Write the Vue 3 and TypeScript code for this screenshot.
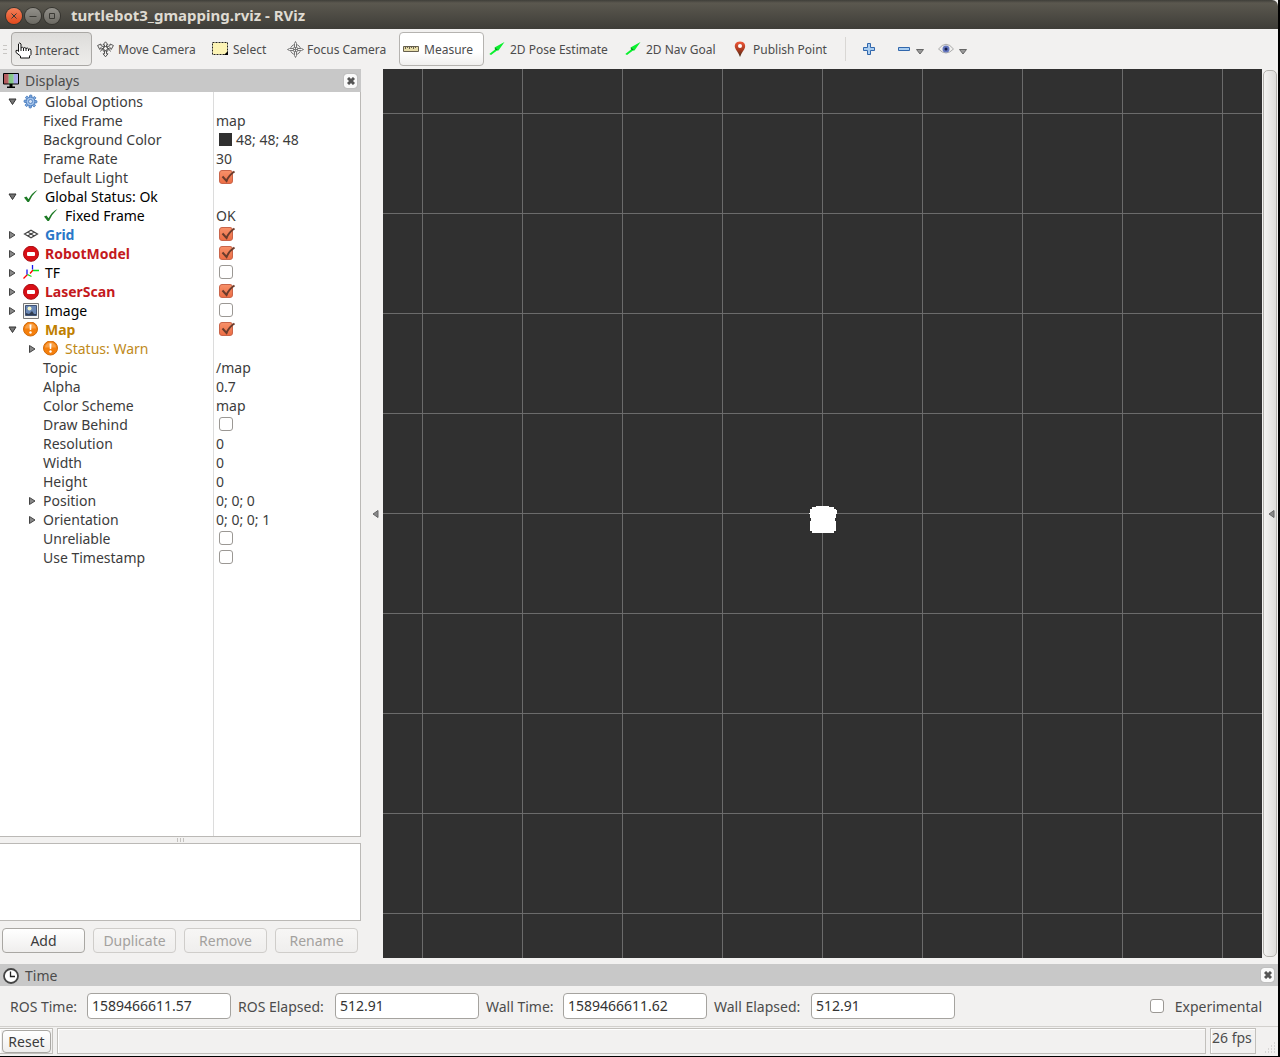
<script setup lang="ts">
import { reactive, ref } from 'vue'

interface Row {
  label: string
  depth: number
  arrow?: 'open' | 'closed'
  icon?: 'gear' | 'ok' | 'grid' | 'error' | 'tf' | 'image' | 'warn'
  tone?: 'dark' | 'enabled' | 'error' | 'warn' | 'warn-plain'
  value?: string
  swatch?: boolean
  checked?: boolean
}

const rows = reactive<Row[]>([
  { label: 'Global Options', depth: 0, arrow: 'open', icon: 'gear' },
  { label: 'Fixed Frame', depth: 1, value: 'map' },
  { label: 'Background Color', depth: 1, value: '48; 48; 48', swatch: true },
  { label: 'Frame Rate', depth: 1, value: '30' },
  { label: 'Default Light', depth: 1, checked: true },
  { label: 'Global Status: Ok', depth: 0, arrow: 'open', icon: 'ok', tone: 'dark' },
  { label: 'Fixed Frame', depth: 1, icon: 'ok', tone: 'dark', value: 'OK' },
  { label: 'Grid', depth: 0, arrow: 'closed', icon: 'grid', tone: 'enabled', checked: true },
  { label: 'RobotModel', depth: 0, arrow: 'closed', icon: 'error', tone: 'error', checked: true },
  { label: 'TF', depth: 0, arrow: 'closed', icon: 'tf', tone: 'dark', checked: false },
  { label: 'LaserScan', depth: 0, arrow: 'closed', icon: 'error', tone: 'error', checked: true },
  { label: 'Image', depth: 0, arrow: 'closed', icon: 'image', tone: 'dark', checked: false },
  { label: 'Map', depth: 0, arrow: 'open', icon: 'warn', tone: 'warn', checked: true },
  { label: 'Status: Warn', depth: 1, arrow: 'closed', icon: 'warn', tone: 'warn-plain' },
  { label: 'Topic', depth: 1, value: '/map' },
  { label: 'Alpha', depth: 1, value: '0.7' },
  { label: 'Color Scheme', depth: 1, value: 'map' },
  { label: 'Draw Behind', depth: 1, checked: false },
  { label: 'Resolution', depth: 1, value: '0' },
  { label: 'Width', depth: 1, value: '0' },
  { label: 'Height', depth: 1, value: '0' },
  { label: 'Position', depth: 1, arrow: 'closed', value: '0; 0; 0' },
  { label: 'Orientation', depth: 1, arrow: 'closed', value: '0; 0; 0; 1' },
  { label: 'Unreliable', depth: 1, checked: false },
  { label: 'Use Timestamp', depth: 1, checked: false },
])

const tools = ['Interact', 'Move Camera', 'Select', 'Focus Camera', 'Measure', '2D Pose Estimate', '2D Nav Goal', 'Publish Point']
const toolKey = (t: string) => t.toLowerCase().replace(/ /g, '-')

const times = reactive([
  { id: 'ros-time', label: 'ROS Time:', value: '1589466611.57', size: 'short' },
  { id: 'ros-elapsed', label: 'ROS Elapsed:', value: '512.91', size: 'long' },
  { id: 'wall-time', label: 'Wall Time:', value: '1589466611.62', size: 'short' },
  { id: 'wall-elapsed', label: 'Wall Elapsed:', value: '512.91', size: 'long' },
])
const experimental = ref(false)
const teeth = [0, 45, 90, 135, 180, 225, 270, 315]
</script>

<template>
  <div class="desktop">
    <div class="window">
      <header class="titlebar">
        <button class="wm close" aria-label="Close"><svg width="16" height="16"><path d="M5.500 5.500l5 5M10.500 5.500l-5 5" /></svg></button>
        <button class="wm" aria-label="Minimize"><svg width="16" height="16"><path d="M4.500 8.500h7" /></svg></button>
        <button class="wm" aria-label="Maximize"><svg width="16" height="16"><path d="M5.500 5.500h5v5h-5z" /></svg></button>
        <h1>turtlebot3_gmapping.rviz - RViz</h1>
      </header>

      <nav class="toolbar">
        <span class="handle"><i></i><i></i><i></i></span>
        <button v-for="t in tools" :key="t" class="tool" :class="toolKey(t)">
          <svg v-if="t === 'Interact'" width="17" height="17" viewBox="0 0 17 17">
            <path d="M3.500 9.500V2Q4.700-.2 6 2V6Q7.500 4.500 8.500 6Q10 4.800 11 6.500Q12.500 5.300 13.500 7Q16 6.300 16 8.500V12.500L14.500 14V16H5.500V14L1 10.500V8.500Q2.500 7.500 3.500 9.500z" fill="#fff" stroke="#111" stroke-linejoin="round" />
            <path d="M6 6v3M8.500 6v3M11 6.500v2.500M13.500 7v2" stroke="#111" fill="none" />
          </svg>
          <svg v-else-if="t === 'Move Camera'" width="17" height="17" viewBox="0 0 17 17">
            <g fill="#f4f3f1" stroke="#444" stroke-width=".9">
              <path d="M8.500.8l2.500 3H9.500v2.500h-2V3.800H6zM8.500 15.800l2.500-3H9.500v-3h-2v3H6zM.6 4.500L4 3v1.700l3 1.200-.8 2-2.500-1.200L2.800 8.500zM16.400 4.500L13 3v1.700l-3 1.200.8 2 2.500-1.200.9 1.800z" />
              <path d="M3.500 10.500l2-3 1 3M13.500 10.500l-2-3-1 3" /><circle cx="8.500" cy="7.500" r="2" />
            </g>
          </svg>
          <svg v-else-if="t === 'Select'" width="17" height="17" viewBox="0 0 17 17">
            <path d="M.5 1.500h15v12H.5z" fill="#fdf4b5" stroke="#222" stroke-dasharray="2 1" /><path d="M16 10v4h-4z" fill="#000" />
          </svg>
          <svg v-else-if="t === 'Focus Camera'" width="17" height="17" viewBox="0 0 17 17">
            <g fill="none" stroke="#777"><circle cx="8.500" cy="8.500" r="5" /><circle cx="8.500" cy="8.500" r="2.500" />
              <path d="M7.500 6V2.500L8.500.5l1 2V6M7.500 11v3.500l1 2 1-2V11M6 7.500H2.500l-2 1 2 1H6M11 7.500h3.500l2 1-2 1H11" fill="#f2f1f0" /><path d="M8.500 6v5M6 8.500h5" /></g>
          </svg>
          <svg v-else-if="t === 'Measure'" width="17" height="17" viewBox="0 0 17 17">
            <path d="M.5 5.500h15v5H.5z" fill="#e6dca8" stroke="#665f4d" /><path d="M2.500 6v2M4.500 6v1M6.500 6v2M8.500 6v1M10.500 6v2M12.500 6v1" stroke="#665f4d" />
          </svg>
          <svg v-else-if="t.startsWith('2D')" width="17" height="17" viewBox="0 0 17 17">
            <path d="M.3 13L6 8.500 5.500 6.500 15.500 1 9.500 9.500 8 9.500 2 14z" fill="#0af02e" /><path d="M6 6.500l3 2.800-2.500-.6z" fill="#116b20" />
          </svg>
          <svg v-else width="15" height="17" viewBox="0 0 15 17">
            <defs><linearGradient id="pin" x2="0" y2="1"><stop stop-color="#f2593a" /><stop offset=".55" stop-color="#a8391f" /><stop offset="1" stop-color="#44301a" /></linearGradient></defs>
            <path d="M6 .5C1.500.5.300 4 1 6.500 1.700 9 4.500 11.500 6 16 7.500 11.500 10.300 9 11 6.500 11.700 4 10.500.5 6 .5z" fill="url(#pin)" /><circle cx="6" cy="5" r="2" fill="#fff" />
          </svg>
          <span>{{ t }}</span>
        </button>
        <span class="rule"></span>
        <button class="icon-tool" aria-label="Add tool"><svg width="14" height="14"><path d="M5.500 1.500h3v4h4v3h-4v4h-3v-4h-4v-3h4z" fill="#a9cdf0" stroke="#3167ac" /></svg></button>
        <button class="icon-tool menu minus" aria-label="Remove tool"><svg width="14" height="14"><path d="M1.500 5.500h11v3h-11z" fill="#a9cdf0" stroke="#3167ac" /></svg><svg class="drop" width="8" height="6"><path d="M.5.5h7L4 5z" fill="#999" stroke="#666" /></svg></button>
        <button class="icon-tool menu" aria-label="Tool view options">
          <svg width="16" height="14"><path d="M.5 7Q8-2.500 15.500 7 8 15 .5 7z" fill="#efefed" stroke="#aaa" /><circle cx="8" cy="7" r="3.500" fill="#6375bd" /><circle cx="8" cy="7" r="1.500" fill="#131b4a" /></svg>
          <svg class="drop" width="8" height="6"><path d="M.5.5h7L4 5z" fill="#999" stroke="#666" /></svg>
        </button>
      </nav>

      <main class="workspace">
        <section class="displays">
          <div class="dock-title">
            <svg width="17" height="17" viewBox="0 0 17 17">
              <defs><linearGradient id="shade"><stop stop-color="#fff" stop-opacity="0" /><stop offset="1" stop-color="#fff" stop-opacity=".3" /></linearGradient></defs>
              <path d="M1 1h4.700v11H1z" fill="#b05558" /><path d="M5.700 1h5v11h-5z" fill="#6fbf75" /><path d="M10.700 1H16v11h-5.300z" fill="#8e8ee4" />
              <path d="M.5 1.500h15v10.500H.5z" fill="url(#shade)" stroke="#000" /><path d="M6.500 12h3v2.500H12V16H4v-1.500h2.500z" fill="#000" />
            </svg>
            <h2>Displays</h2>
            <button class="dock-close" aria-label="Close Displays"><svg width="8" height="8"><path d="M1 1l6 6M7 1L1 7" /></svg></button>
          </div>
          <div class="tree">
            <table>
              <tbody>
                <tr v-for="(r, i) in rows" :key="i">
                  <td class="name">
                    <div class="cell" :class="['depth-' + r.depth, r.tone]">
                      <span class="arrow">
                        <svg v-if="r.arrow === 'open'" width="9" height="8"><path d="M1 1h7L4.500 6.500z" fill="#777" stroke="#333" /></svg>
                        <svg v-else-if="r.arrow" width="9" height="8"><path d="M1.500.5v7L7 4z" fill="#888" stroke="#444" /></svg>
                      </span>
                      <span v-if="r.icon" class="icon">
                        <svg v-if="r.icon === 'gear'" width="16" height="16" viewBox="0 0 16 16">
                          <g fill="#7ea9dd" stroke="#3f74b8" stroke-width=".8"><rect v-for="a in teeth" :key="a" x="6.500" y="1" width="2.500" height="4" rx="1" :transform="`rotate(${a} 7.500 7.500)`" /></g>
                          <circle cx="7.500" cy="7.500" r="4.300" fill="#a3c3ea" stroke="#5786c5" /><circle cx="7.500" cy="7.500" r="2" fill="#d5e3f5" stroke="#5786c5" />
                        </svg>
                        <svg v-else-if="r.icon === 'ok'" width="16" height="16" viewBox="0 0 16 16"><path d="M1 8.500l2.500-1 2 2.800Q9 3.500 14.500 1 9 6 6 13H4.500z" fill="#1d7a25" /></svg>
                        <svg v-else-if="r.icon === 'grid'" width="16" height="16" viewBox="0 0 16 16"><path d="M1.500 7L8 3.200 14.500 7 8 10.800zM4.700 5l6.600 4M11.300 5L4.700 9" fill="none" stroke="#444" stroke-width="1.200" /></svg>
                        <svg v-else-if="r.icon === 'error'" width="16" height="16" viewBox="0 0 16 16"><circle cx="8" cy="7.800" r="7.500" fill="#d90f16" stroke="#a80c10" /><rect x="4" y="6" width="8" height="4" rx="1" fill="#fff" /></svg>
                        <svg v-else-if="r.icon === 'tf'" width="16" height="16" viewBox="0 0 16 16"><g fill="none" stroke-width="1.300"><path d="M.5 13.500l4-4M7 8.500l3-3.500" stroke="red" /><path d="M4 9.500v-5M9.500 4.500V0" stroke="#1717f0" /><path d="M4.500 9.500l4 2M10 5.500h6" stroke="#0be018" /></g></svg>
                        <svg v-else-if="r.icon === 'image'" width="16" height="16" viewBox="0 0 16 16"><path d="M.5.5h15v15H.5z" fill="#f4f4f2" stroke="#777" /><path d="M2.500 2.500h11v10h-11z" fill="#6987b5" stroke="#405375" /><circle cx="6.500" cy="5.500" r="2" fill="#f4f5ca" /><path d="M3 10l3 1 3-3 2 3h2v1H3z" fill="#303c50" /></svg>
                        <svg v-else width="16" height="16" viewBox="0 0 16 16"><circle cx="7.500" cy="7" r="7" fill="#f57f0c" stroke="#d06a0a" /><path d="M2 6.500a5.500 5 0 0 1 11 0z" fill="#f8a047" /><path d="M6.500 2.500h2l-.3 5.500H6.800z" fill="#fff" /><circle cx="7.500" cy="10.500" r="1.200" fill="#fff" /></svg>
                      </span>
                      <label v-if="r.checked !== undefined" :for="'prop-' + i">{{ r.label }}</label>
                      <span v-else>{{ r.label }}</span>
                    </div>
                  </td>
                  <td class="value">
                    <div class="cell">
                      <span v-if="r.swatch" class="swatch"></span>
                      <span v-if="r.checked !== undefined" class="check">
                        <input :id="'prop-' + i" v-model="r.checked" type="checkbox" />
                        <svg v-if="r.checked" width="17" height="15"><path d="M3.500 6.500l4 4.500Q10 5 15.500 1.500" /></svg>
                      </span>
                      <span v-else>{{ r.value }}</span>
                    </div>
                  </td>
                </tr>
              </tbody>
            </table>
          </div>
          <div class="splitter"><i></i><i></i><i></i></div>
          <div class="help"></div>
          <div class="actions">
            <button class="push">Add</button>
            <button class="push" disabled>Duplicate</button>
            <button class="push" disabled>Remove</button>
            <button class="push" disabled>Rename</button>
          </div>
        </section>
        <button class="collapse-left" aria-label="Hide left dock"><svg width="7" height="8"><path d="M6 .5v7L1 4z" fill="#888" stroke="#666" /></svg></button>
        <div class="viewport">
          <svg width="28" height="27"><path d="M7 1V0h13v1h5v2h2v1h1v4h-1v4h-1v3h1v10h-2v2H3v-2H1V15h1v-3H1V8H0V7h1V3h2V1z" fill="#fff" /></svg>
        </div>
        <button class="collapse-right" aria-label="Hide right dock"><svg width="7" height="8"><path d="M6 .5v7L1 4z" fill="#888" stroke="#666" /></svg></button>
      </main>

      <section class="time">
        <div class="dock-title">
          <svg width="17" height="17" viewBox="0 0 17 17"><circle cx="8" cy="9" r="7" fill="#fff" stroke="#444" stroke-width="1.800" /><path d="M7.500 4.500v5H12" fill="none" stroke="#222" stroke-width="1.300" /></svg>
          <h2>Time</h2>
          <button class="dock-close" aria-label="Close Time"><svg width="8" height="8"><path d="M1 1l6 6M7 1L1 7" /></svg></button>
        </div>
        <form class="clocks" @submit.prevent>
          <div v-for="f in times" :key="f.id" class="field" :class="f.size">
            <label :for="f.id">{{ f.label }}</label>
            <input :id="f.id" v-model="f.value" type="text" readonly />
          </div>
          <label class="experimental"><span class="check"><input v-model="experimental" type="checkbox" /></span>Experimental</label>
        </form>
      </section>

      <footer class="status">
        <div class="frame reset"><button class="push">Reset</button></div>
        <div class="frame message"></div>
        <div class="frame fps">26 fps</div>
        <svg class="grip" width="12" height="12"><path d="M10 1h1M7 4h1M10 4h1M4 7h1M7 7h1M10 7h1M1 10h1M4 10h1M7 10h1M10 10h1" stroke="#bbb" /></svg>
      </footer>
    </div>
  </div>
</template>

<style>
body { margin: 0; background: #000; }
</style>

<style scoped>
* { box-sizing: border-box; }
svg { display: block; flex: none; }
button { font: inherit; color: inherit; margin: 0; padding: 0; border: 0; background: none; }
h1, h2 { margin: 0; font-weight: 400; }

.desktop { min-height: 100vh; display: flex; padding: 0 2px 1px 0; background: #000; font: 14px/19px "Noto Sans", "Open Sans", sans-serif; color: #3c3c3c; }
.window { flex: 1; min-width: 0; display: flex; flex-direction: column; background: #f2f1f0; }

.titlebar { height: 29px; display: flex; align-items: center; gap: 3px; padding: 2px 6px 0; background: linear-gradient(#3f3e39, #5b584f 3px, #3e3d38); border-radius: 0 6px 0 0; }
.wm { width: 16px; height: 16px; border-radius: 50%; background: linear-gradient(#92908a, #6c6a63); box-shadow: 0 0 0 1px #35342f; }
.wm path { fill: none; stroke: #3b3a35; }
.wm.close { background: linear-gradient(#f58059, #e2491c); }
.titlebar h1 { margin-left: 8px; font-size: 15px; font-weight: 700; color: #dfdbd2; }

.toolbar { height: 40px; display: flex; align-items: center; gap: 1px; font-size: 12px; color: #4c4c4c; }
.handle { width: 10px; display: grid; gap: 3px; padding-left: 3px; }
.handle i { width: 4px; height: 1px; background: #c8c6c3; }
.tool { height: 34px; display: flex; align-items: center; gap: 4px; padding: 0 3px; border: 1px solid transparent; border-radius: 4px; white-space: nowrap; }
.interact { width: 81px; gap: 3px; padding-top: 2px; border-color: #aaa8a5; background: linear-gradient(#dddcda, #eeedeb); }
.move-camera { width: 114px; }
.select { width: 74px; }
.focus-camera { width: 115px; gap: 3px; }
.measure { width: 85px; border-color: #b5b3b0; background: linear-gradient(#fff 60%, #f0efee); }
.\32 d-pose-estimate { width: 135px; }
.\32 d-nav-goal { width: 108px; }
.publish-point { width: 114px; }
.rule { width: 1px; height: 24px; background: #d9d7d4; }
.icon-tool { display: flex; align-items: center; margin-left: 15px; }
.minus { margin-left: 20px; }
.menu { gap: 5px; }
.menu + .menu { margin-left: 13px; }
.drop { margin-top: 6px; }

.workspace { flex: 1; display: flex; min-height: 0; }
.displays { width: 361px; flex: none; display: flex; flex-direction: column; }
.dock-title { height: 22px; flex: none; display: flex; align-items: center; gap: 5px; padding: 0 4px 0 3px; background: #c8c8c8; color: #4c4c4c; }
.displays .dock-title { height: 23px; }
.dock-title h2 { flex: 1; font-size: 14px; }
.dock-close { width: 13px; height: 14px; display: grid; place-items: center; border-radius: 3px; background: #fafafa; box-shadow: 0 0 1px #777; }
.dock-close path { stroke: #555; stroke-width: 3; }

.tree { flex: 1; border: 1px solid #bbb9b6; border-width: 0 1px 1px 0; background: linear-gradient(90deg, #fff 213px, #dcdcdc 213px, #dcdcdc 214px, #fff 214px); }
table { width: 100%; table-layout: fixed; border-collapse: collapse; }
td { height: 19px; padding: 0; }
.name { width: 214px; }
.cell { height: 19px; display: flex; align-items: center; white-space: nowrap; }
.arrow { width: 15px; flex: none; }
.icon { width: 22px; flex: none; }
.depth-0 { padding-left: 8px; }
.depth-1 { padding-left: 28px; }
.dark { color: #000; }
.enabled { color: #2a78c8; font-weight: 700; }
.error { color: #c4191d; font-weight: 700; }
.warn { color: #c08000; font-weight: 700; }
.warn-plain { color: #c08a1a; }
.value .cell { padding-left: 2px; }
.swatch { width: 13px; height: 13px; margin: 0 4px 0 3px; background: #303030; }

.check { position: relative; width: 14px; height: 14px; margin-left: 3px; flex: none; }
.value .check { margin-bottom: 2px; }
.check input { appearance: none; display: block; width: 14px; height: 14px; margin: 0; border: 1px solid #9b9894; border-radius: 3px; background: #fff; }
.check input:checked { border-color: #c9654a; background: linear-gradient(#f79069, #ed6e45); }
.check svg { position: absolute; left: 0; top: 0; pointer-events: none; }
.check path { fill: none; stroke: #6b3c2c; stroke-width: 2; }

.splitter { height: 6px; display: flex; justify-content: center; align-items: center; gap: 2px; }
.splitter i { width: 1px; height: 4px; background: #c4c2bf; }
.help { height: 78px; border: 1px solid #bbb9b6; border-left: 0; background: #fff; }
.actions { display: flex; gap: 8px; padding: 7px 2px 5px; }
.push { width: 83px; height: 25px; border: 1px solid #a9a7a3; border-radius: 4px; background: linear-gradient(#fff, #efeeed); }
.push:disabled { color: #a3a19e; border-color: #cfcdca; background: linear-gradient(#f7f6f5, #efeeed); }

.collapse-left { width: 22px; flex: none; display: flex; align-items: center; justify-content: flex-end; padding-right: 4px; }
.viewport { flex: 1; min-width: 0; display: flex; align-items: center; justify-content: center; padding-top: 12px; background: #303030; background-image: linear-gradient(#6b6b6b 1px, transparent 1px), linear-gradient(90deg, #6b6b6b 1px, transparent 1px); background-size: 100px 100px; background-position: 39px 44px; }
.collapse-right { width: 14px; flex: none; margin: 1px; display: flex; align-items: center; justify-content: flex-end; padding-right: 1px; border: 1px solid #b3b1ad; border-radius: 5px; background: linear-gradient(90deg, #f4f3f2, #dddcda); }

.time { padding-top: 6px; }
.clocks { height: 40px; display: flex; align-items: center; gap: 7px; padding: 0 16px 0 10px; color: #4c4c4c; }
.field { display: flex; align-items: center; white-space: nowrap; }
.field label { width: 77px; }
.long label { width: 97px; }
.field input { width: 144px; height: 26px; padding: 0 4px 2px; border: 1px solid #a5a39f; border-radius: 4px; background: #fff; font: inherit; color: #333; }
.experimental { display: flex; align-items: center; gap: 8px; margin-left: auto; }
.experimental .check { margin-right: 3px; }

.status { height: 30px; display: flex; gap: 4px; padding: 1px 2px 2px 0; border-top: 1px solid #d2d0cd; }
.frame { border: 1px solid #c2c0bc; box-shadow: inset 1px 1px #fff; }
.reset { padding: 1px 1px 1px 2px; border-left: 0; }
.reset .push { width: 49px; height: 23px; display: block; line-height: 19px; }
.message { flex: 1; }
.fps { width: 46px; line-height: 18px; white-space: nowrap; padding-left: 1px; color: #4c4c4c; }
.grip { align-self: flex-end; margin-left: 4px; }
</style>
